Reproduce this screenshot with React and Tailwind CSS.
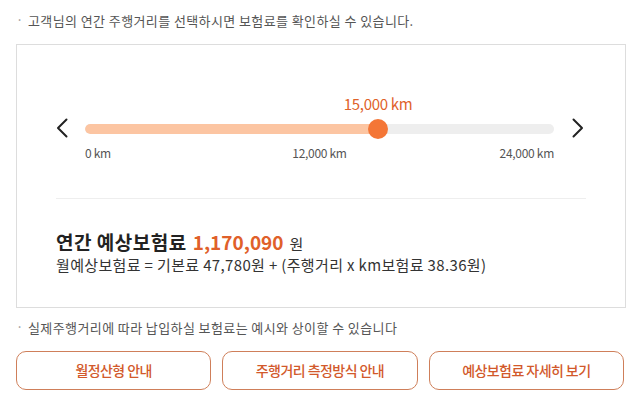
import React from "react";

const FONT = { fontFamily: '"Noto Sans CJK KR", "Noto Sans", sans-serif' };

function Chevron({ dir }) {
  return (
    <svg width="12" height="20" viewBox="0 0 12 20" fill="none">
      {dir === "left" ? (
        <path d="M10.5 1.5 L2 10 L10.5 18.5" stroke="#222" strokeWidth="2" strokeLinecap="round" strokeLinejoin="round" />
      ) : (
        <path d="M1.5 1.5 L10 10 L1.5 18.5" stroke="#222" strokeWidth="2" strokeLinecap="round" strokeLinejoin="round" />
      )}
    </svg>
  );
}

export default function App() {
  return (
    <div className="w-[644px] h-[400px] bg-white overflow-hidden" style={FONT}>
      <div className="pt-3 pl-4 flex items-center h-[30px] text-[13px] leading-[18px] text-[#555] tracking-[0.4px]">
        <span className="w-[12px] text-[#999] -mt-[3px]">·</span>
        <span>고객님의 연간 주행거리를 선택하시면 보험료를 확인하실 수 있습니다.</span>
      </div>

      <div className="ml-4 mt-[14px] w-[610px] h-[264px] border border-[#dddddd] px-[39px]">
        <div className="pt-[49px] flex items-start">
          <div className="w-[12px] mt-[24px] shrink-0">
            <Chevron dir="left" />
          </div>
          <div className="ml-[17px] w-[469px] flex flex-col">
            <div className="relative h-[20px]">
              <span className="absolute left-[62.5%] -translate-x-1/2 top-0 whitespace-nowrap text-[15px] leading-[20px] text-[#e0622a] tracking-[-0.3px]">
                15,000 km
              </span>
            </div>
            <div className="relative h-[20px] mt-[5px] flex items-center">
              <div className="w-full h-[10px] rounded-full bg-[#eeeeee] overflow-hidden">
                <div className="h-full w-[62.5%] bg-[#fcc5a2] rounded-full" />
              </div>
              <div className="absolute left-[62.5%] top-0 -translate-x-1/2 w-[20px] h-[20px] rounded-full bg-[#f47636]" />
            </div>
            <div className="mt-[6px] grid grid-cols-3 text-[12px] leading-[16px] text-[#555] tracking-[-0.3px]">
              <span className="text-left">0 km</span>
              <span className="text-center">12,000 km</span>
              <span className="text-right">24,000 km</span>
            </div>
          </div>
          <div className="ml-[18px] w-[12px] mt-[24px] shrink-0">
            <Chevron dir="right" />
          </div>
        </div>

        <div className="mt-[37px] h-px bg-[#eeeeee]" />

        <div className="mt-[30px] flex items-baseline h-[26px] leading-[26px]">
          <span className="text-[19px] font-bold text-[#222] tracking-[0.5px]">연간 예상보험료</span>
          <span className="ml-[6px] text-[19px] font-bold text-[#e0602a]">1,170,090</span>
          <span className="ml-[6px] text-[15px] text-[#333]">원</span>
        </div>
        <div className="text-[15px] leading-[20px] text-[#333] tracking-[0.35px]">
          월예상보험료 = 기본료 47,780원 + (주행거리 x km보험료 38.36원)
        </div>
      </div>

      <div className="mt-[11px] pl-4 flex items-center h-[18px] text-[13px] leading-[18px] text-[#555] tracking-[0.4px]">
        <span className="w-[12px] text-[#999] -mt-[3px]">·</span>
        <span>실제주행거리에 따라 납입하실 보험료는 예시와 상이할 수 있습니다</span>
      </div>

      <div className="ml-4 mt-[14px] w-[608px] grid grid-cols-3 gap-[11px]">
        {["월정산형 안내", "주행거리 측정방식 안내", "예상보험료 자세히 보기"].map((t) => (
          <button
            key={t}
            className="h-[39px] rounded-[10px] border border-[#cf7f5a] bg-white text-[14px] font-medium text-[#d2592b] tracking-[-0.04em] flex items-center justify-center"
          >
            {t}
          </button>
        ))}
      </div>
    </div>
  );
}
